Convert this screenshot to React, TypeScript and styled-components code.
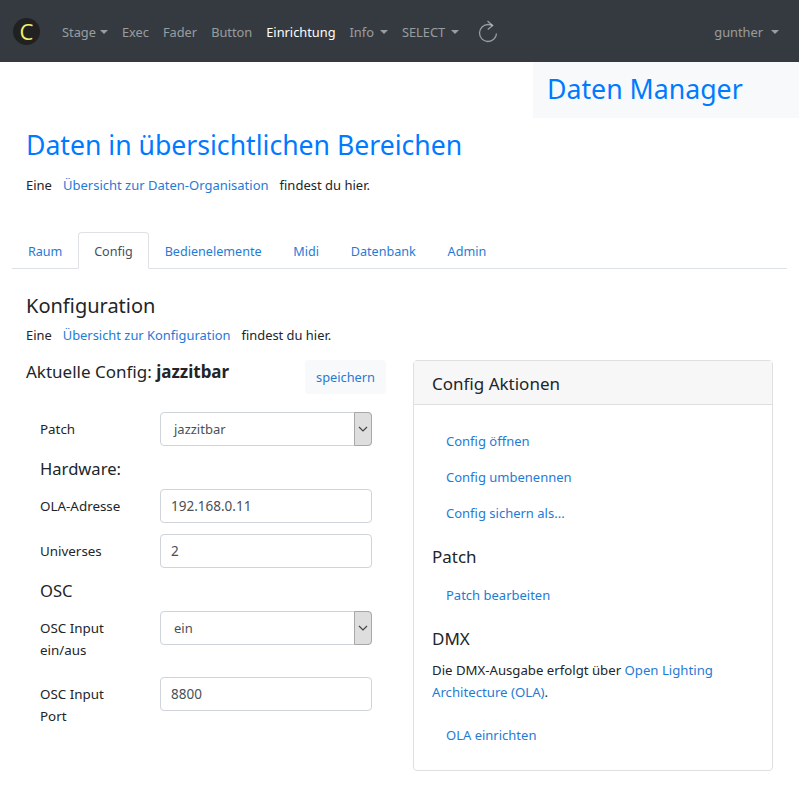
import React from "react";
import styled, { createGlobalStyle } from "styled-components";

const GlobalStyle = createGlobalStyle`
  html, body {
    margin: 0;
    padding: 0;
    background: #fff;
    color: #212529;
    font-family: "Noto Sans", "Open Sans", sans-serif;
    font-size: 13px;
  }
  * { box-sizing: border-box; }
`;

const Navbar = styled.nav`
  height: 62px;
  background: #343a40;
  display: flex;
  align-items: center;
  padding: 0 20px 0 13px;
`;

const Logo = styled.div`
  width: 27px;
  height: 27px;
  border-radius: 50%;
  background: #212121;
  color: #eef06a;
  display: flex;
  align-items: center;
  justify-content: center;
  font-family: "Open Sans", sans-serif;
  font-size: 22px;
  font-weight: 400;
  line-height: 1;
  margin-right: 22px;
`;

const NavItem = styled.a<{ $active?: boolean; $caret?: number }>`
  color: ${(p) => (p.$active ? "#fff" : "rgba(255,255,255,0.5)")};
  font-size: 12.8px;
  line-height: 20px;
  margin: 2px 14px 0 0;
  display: flex;
  align-items: center;
  white-space: nowrap;
  &::after {
    content: "";
    display: ${(p) => (p.$caret ? "inline-block" : "none")};
    margin-left: ${(p) => p.$caret}px;
    border-top: 4px solid;
    border-left: 4px solid transparent;
    border-right: 4px solid transparent;
  }
`;

const Reload = styled.svg`
  width: 20px;
  height: 23px;
  margin: 0 0 0 5px;
  fill: none;
  stroke: rgba(255, 255, 255, 0.5);
  stroke-width: 1.3;
`;

const UserMenu = styled(NavItem)`
  margin-left: auto;
  margin-right: 0;
`;

const BannerRow = styled.div`
  display: flex;
  justify-content: flex-end;
`;

const Banner = styled.div`
  width: 266px;
  height: 56px;
  background: #f8f9fa;
  color: #007bff;
  font-size: 26.7px;
  line-height: 54px;
  padding-left: 14px;
`;

const Intro = styled.section`
  padding: 8px 26px 0;
`;

const Title = styled.h1`
  margin: 0;
  color: #007bff;
  font-size: 26.6px;
  font-weight: 400;
  line-height: 38px;
`;

const LinkLine = styled.p`
  margin: 0;
  line-height: 20px;
  display: flex;
  gap: 11px;
`;

const IntroLine = styled(LinkLine)`
  margin-top: 11px;
  font-size: 13px;
`;

const PaneLine = styled(LinkLine)`
  margin-top: 3px;
  font-size: 12.9px;
`;

const TextLink = styled.a`
  color: #1f7bd6;
`;

const Tabs = styled.div`
  margin: 37px 12px 0;
  height: 37px;
  border-bottom: 1px solid #dee2e6;
  display: flex;
`;

const Tab = styled.a<{ $active?: boolean }>`
  height: 37px;
  padding: 0 14.9px;
  font-size: 12.6px;
  line-height: 38px;
  color: ${(p) => (p.$active ? "#495057" : "#1f7bd6")};
  background: ${(p) => (p.$active ? "#fff" : "transparent")};
  border: 1px solid ${(p) => (p.$active ? "#dee2e6" : "transparent")};
  border-bottom-color: ${(p) => (p.$active ? "#fff" : "transparent")};
  border-radius: 4px 4px 0 0;
`;

const Pane = styled.section`
  padding: 21px 26px 0;
`;

const PaneTitle = styled.h2`
  margin: 0;
  font-size: 20px;
  font-weight: 400;
  line-height: 32px;
`;

const Columns = styled.div`
  display: grid;
  grid-template-columns: 360px 360px;
  column-gap: 27px;
  margin-top: 15px;
`;

const ConfigHead = styled.div`
  display: flex;
  justify-content: space-between;
  align-items: flex-start;
  height: 52px;
`;

const ConfigName = styled.div`
  font-size: 17px;
  line-height: 24px;
  b { font-weight: 700; }
`;

const SaveButton = styled.button`
  width: 81px;
  height: 34px;
  border: 0;
  border-radius: 4px;
  background: #f8f9fa;
  color: #1f7bd6;
  font: inherit;
  font-size: 12.8px;
`;

const Form = styled.div`
  padding-left: 14px;
  width: 346px;
`;

const FormRow = styled.div<{ $h: number }>`
  display: grid;
  grid-template-columns: 120px 212px;
  align-items: start;
  height: ${(p) => p.$h}px;
`;

const Label = styled.label`
  font-size: 13.4px;
  line-height: 22px;
  padding-top: 6px;
`;

const Field = styled.div`
  height: 34px;
  border: 1px solid #ced4da;
  border-radius: 4px;
  padding: 0 10px;
  font-size: 13.5px;
  line-height: 32px;
  color: #495057;
  background: #fff;
`;

const SelectField = styled(Field)`
  display: flex;
  justify-content: space-between;
  padding: 0 0 0 13px;
  font-size: 13px;
`;

const SelectArrow = styled.span`
  width: 18px;
  margin: -1px -1px -1px 0;
  background: #dedede;
  border: 1px solid #a8a8a8;
  border-radius: 0 4px 4px 0;
  display: flex;
  align-items: center;
  justify-content: center;
  svg {
    width: 10px;
    height: 6px;
    fill: none;
    stroke: #444;
    stroke-width: 1.2;
  }
`;

const FormHeading = styled.h3`
  margin: 0 0 8px;
  font-size: 16.6px;
  font-weight: 400;
  line-height: 24px;
`;

const Card = styled.aside`
  height: 411px;
  border: 1px solid #dfdfdf;
  border-radius: 4px;
  display: flex;
  flex-direction: column;
`;

const CardHeader = styled.div`
  height: 44px;
  background: #f7f7f7;
  border-bottom: 1px solid #dfdfdf;
  padding-left: 18px;
  font-size: 17px;
  line-height: 45px;
`;

const CardBody = styled.div`
  padding: 18px 18px 0;
`;

const ActionLink = styled.a`
  display: block;
  padding-left: 14px;
  font-size: 13px;
  line-height: 36px;
  color: #1f7bd6;
`;

const CardHeading = styled.h4`
  margin: 0;
  font-size: 17px;
  font-weight: 400;
  line-height: 28px;
`;

const PatchHeading = styled(CardHeading)`
  margin: 12px 0 6px;
`;

const DmxHeading = styled(CardHeading)`
  margin-top: 12px;
`;

const CardText = styled.p`
  margin: 6px 0 14px;
  font-size: 13.2px;
  line-height: 22px;
`;

function Select({ value }: { value: string }) {
  return (
    <SelectField>
      {value}
      <SelectArrow>
        <svg viewBox="0 0 10 6">
          <path d="M1 1l4 4 4-4" />
        </svg>
      </SelectArrow>
    </SelectField>
  );
}

export default function App() {
  return (
    <>
      <GlobalStyle />
      <Navbar>
        <Logo>C</Logo>
        <NavItem $caret={4}>Stage</NavItem>
        <NavItem>Exec</NavItem>
        <NavItem>Fader</NavItem>
        <NavItem>Button</NavItem>
        <NavItem $active>Einrichtung</NavItem>
        <NavItem $caret={6}>Info</NavItem>
        <NavItem $caret={6}>SELECT</NavItem>
        <Reload viewBox="0 0 20 23">
          <path d="M14.5 5.5C13 4.8 11.5 4.5 10 4.5A8.5 8.5 0 1 0 18.5 13.5" />
          <path d="M9.5 1l5.2 4.5-5 4" />
        </Reload>
        <UserMenu $caret={8}>gunther</UserMenu>
      </Navbar>
      <BannerRow>
        <Banner>Daten Manager</Banner>
      </BannerRow>
      <Intro>
        <Title>Daten in übersichtlichen Bereichen</Title>
        <IntroLine>
          Eine <TextLink>Übersicht zur Daten-Organisation</TextLink> findest du hier.
        </IntroLine>
      </Intro>
      <Tabs>
        <Tab>Raum</Tab>
        <Tab $active>Config</Tab>
        <Tab>Bedienelemente</Tab>
        <Tab>Midi</Tab>
        <Tab>Datenbank</Tab>
        <Tab>Admin</Tab>
      </Tabs>
      <Pane>
        <PaneTitle>Konfiguration</PaneTitle>
        <PaneLine>
          Eine <TextLink>Übersicht zur Konfiguration</TextLink> findest du hier.
        </PaneLine>
        <Columns>
          <div>
            <ConfigHead>
              <ConfigName>
                Aktuelle Config: <b>jazzitbar</b>
              </ConfigName>
              <SaveButton>speichern</SaveButton>
            </ConfigHead>
            <Form>
              <FormRow $h={45}>
                <Label>Patch</Label>
                <Select value="jazzitbar" />
              </FormRow>
              <FormHeading>Hardware:</FormHeading>
              <FormRow $h={45}>
                <Label>OLA-Adresse</Label>
                <Field>192.168.0.11</Field>
              </FormRow>
              <FormRow $h={45}>
                <Label>Universes</Label>
                <Field>2</Field>
              </FormRow>
              <FormHeading>OSC</FormHeading>
              <FormRow $h={66}>
                <Label>
                  OSC Input
                  <br />
                  ein/aus
                </Label>
                <Select value="ein" />
              </FormRow>
              <FormRow $h={66}>
                <Label>
                  OSC Input
                  <br />
                  Port
                </Label>
                <Field>8800</Field>
              </FormRow>
            </Form>
          </div>
          <Card>
            <CardHeader>Config Aktionen</CardHeader>
            <CardBody>
              <ActionLink>Config öffnen</ActionLink>
              <ActionLink>Config umbenennen</ActionLink>
              <ActionLink>Config sichern als...</ActionLink>
              <PatchHeading>Patch</PatchHeading>
              <ActionLink>Patch bearbeiten</ActionLink>
              <DmxHeading>DMX</DmxHeading>
              <CardText>
                Die DMX-Ausgabe erfolgt über <TextLink>Open Lighting Architecture (OLA)</TextLink>.
              </CardText>
              <ActionLink>OLA einrichten</ActionLink>
            </CardBody>
          </Card>
        </Columns>
      </Pane>
    </>
  );
}
